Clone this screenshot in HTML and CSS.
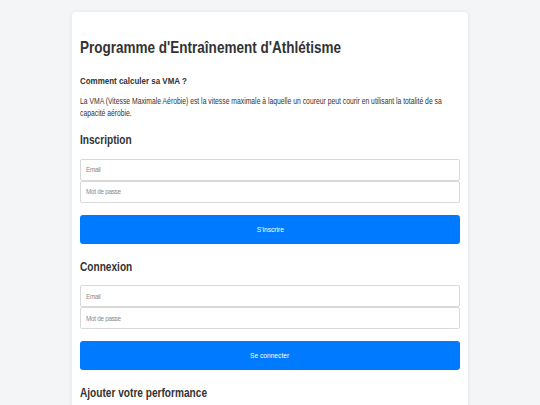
FILE: index.html
```html
<!DOCTYPE html>
<html lang="fr">
  <head>
    <meta charset="UTF-8" />
    <meta name="viewport" content="width=device-width, initial-scale=1.0" />
    <title>Programme d'Entraînement d'Athlétisme</title>
    <link rel="stylesheet" href="styles.css">
  </head>
  <body>
    <div class="container">
      <h1>Programme d'Entraînement d'Athlétisme</h1>

      <h3>Comment calculer sa VMA ?</h3>
      <p>
        La VMA (Vitesse Maximale Aérobie) est la vitesse maximale à laquelle un
        coureur peut courir en utilisant la totalité de sa capacité aérobie.
      </p>

      <h2>Inscription</h2>
      <form action="/register" method="post" class="auth-form">
        <input type="email" name="email" placeholder="Email" required />
        <input type="password" name="password" placeholder="Mot de passe" required />
        <button type="submit" class="btn"><span>S'inscrire</span></button>
      </form>

      <h2>Connexion</h2>
      <form action="/login" method="post" class="auth-form">
        <input type="email" name="email" placeholder="Email" required />
        <input type="password" name="password" placeholder="Mot de passe" required />
        <button type="submit" class="btn"><span>Se connecter</span></button>
      </form>

      <h2>Ajouter votre performance</h2>
    </div>
  </body>
</html>
```

FILE: styles.css
```css
:root {
  --primary-color: #007bff;
  --text-color: #333333;
  --placeholder-color: #8a8a8a;
  --background-color: #f4f5f7;
  --border-color: #d9d9d9;
  /* the type is set narrow, like a condensed face */
  --narrow: 0.83;
}

* {
  box-sizing: border-box;
}

body {
  margin: 0;
  font-family: "Liberation Sans", Arial, sans-serif;
  background-color: var(--background-color);
  color: var(--text-color);
  line-height: 1.5;
}

.container {
  width: 396px;
  margin: 12px auto 0;
  padding: 23px 8px 20px;
  background-color: white;
  border-radius: 4px;
  box-shadow: 0 0 5px rgba(0, 0, 0, 0.08);
}

h1,
h2,
h3,
p {
  width: calc(100% / var(--narrow));
  transform: scaleX(var(--narrow));
  transform-origin: left top;
}

h1 {
  font-size: 16.3px;
  margin: 0 0 15px;
}

h2 {
  font-size: 12.2px;
  margin: 0 0 9px;
}

h3 {
  font-size: 9.6px;
  margin: 0 0 7px;
}

p {
  font-size: 8.2px;
  margin: 0 0 11px;
}

.auth-form {
  margin-bottom: 14px;
}

.auth-form input {
  display: block;
  width: 100%;
  height: 22px;
  padding: 0 5px;
  font-family: inherit;
  font-size: 6.4px;
  letter-spacing: -0.3px;
  color: var(--text-color);
  border: 1px solid var(--border-color);
  border-radius: 2px;
  outline: 0;
}

.auth-form input::placeholder {
  color: var(--placeholder-color);
}

.btn {
  display: block;
  width: 100%;
  height: 29px;
  margin-top: 12px;
  font-family: inherit;
  font-size: 8px;
  color: white;
  background-color: var(--primary-color);
  border: none;
  border-radius: 3px;
  cursor: pointer;
}

.btn span {
  display: inline-block;
  transform: scaleX(var(--narrow));
}
```
